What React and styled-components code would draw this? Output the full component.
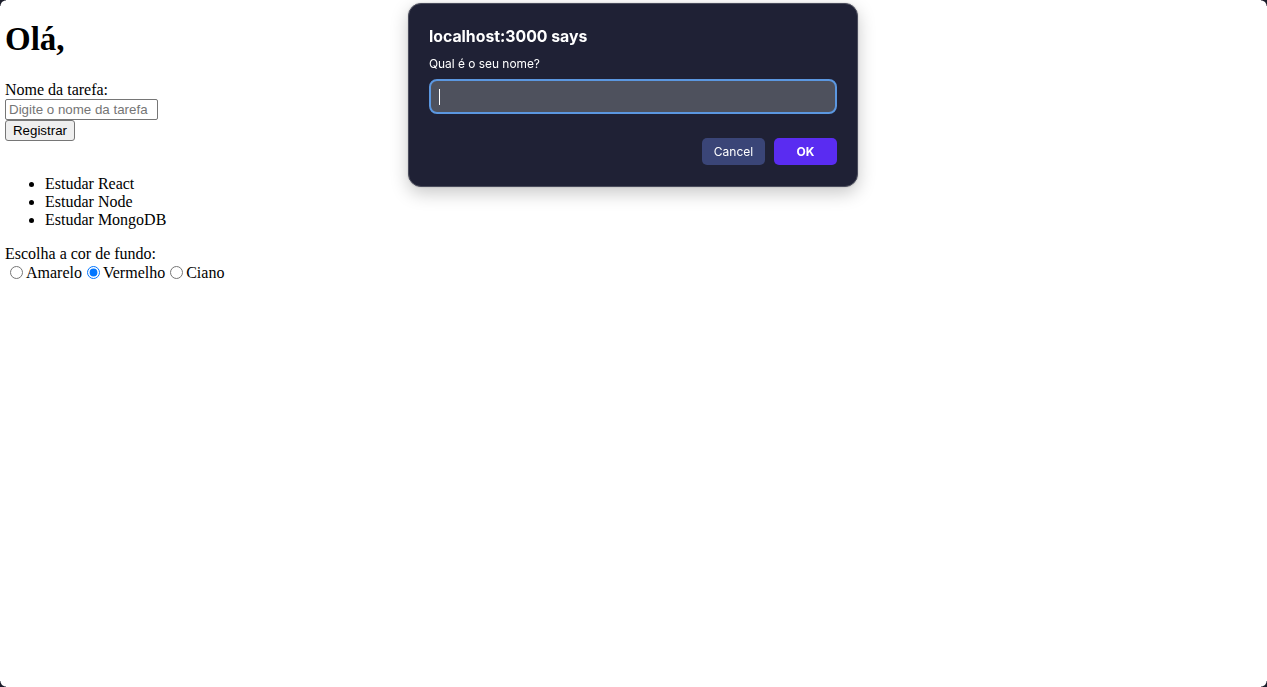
import styled, { createGlobalStyle } from 'styled-components';

const GlobalStyle = createGlobalStyle`
  html, body {
    margin: 0;
    background: #ffffff;
  }
  body {
    font-family: "Liberation Serif", "Times New Roman", serif;
    font-size: 16px;
    color: #000;
  }
`;

const tasks = ['Estudar React', 'Estudar Node', 'Estudar MongoDB'];
const colors = [
  { id: 'amarelo', label: 'Amarelo' },
  { id: 'vermelho', label: 'Vermelho' },
  { id: 'ciano', label: 'Ciano' },
];

export default function App() {
  return (
    <>
      <GlobalStyle />
      <Page>
        <Title>Olá,</Title>
        <form onSubmit={e => e.preventDefault()}>
          <label htmlFor="tarefa">Nome da tarefa:</label>
          <br />
          <TaskInput id="tarefa" placeholder="Digite o nome da tarefa" />
          <br />
          <NativeButton type="submit">Registrar</NativeButton>
        </form>
        <TaskList>
          {tasks.map(task => (
            <li key={task}>{task}</li>
          ))}
        </TaskList>
        <div>
          Escolha a cor de fundo:
          <br />
          {colors.map(color => (
            <RadioLabel key={color.id}>
              <Radio type="radio" name="cor" defaultChecked={color.id === 'vermelho'} />
              {color.label}
            </RadioLabel>
          ))}
        </div>
      </Page>

      <Dialog>
        <DialogTitle>localhost:3000 says</DialogTitle>
        <DialogMessage>Qual é o seu nome?</DialogMessage>
        <PromptField>
          <Caret />
        </PromptField>
        <DialogActions>
          <DialogButton>Cancel</DialogButton>
          <DialogButton $primary>OK</DialogButton>
        </DialogActions>
      </Dialog>

      <Corner $pos="tl" />
      <Corner $pos="tr" />
      <Corner $pos="bl" />
      <Corner $pos="br" />
    </>
  );
}

const Page = styled.div`
  padding: 0 5px;
  min-height: 687px;
  box-sizing: border-box;
  overflow: hidden;
`;

const Title = styled.h1`
  font-size: 33px;
  font-weight: 700;
  margin: 20px 0 23px;
  line-height: 38px;
`;

const TaskInput = styled.input`
  font-family: Arial, "Liberation Sans", sans-serif;
  font-size: 13.33px;
  width: 153px;
  height: 21px;
  box-sizing: border-box;
  padding: 1px 3px;
  margin: 0;
  border: 1px solid #767676;
  border-radius: 2px;
  color: #000;

  &::placeholder {
    color: #757575;
  }
`;

const NativeButton = styled.button`
  font-family: Arial, "Liberation Sans", sans-serif;
  font-size: 13.33px;
  height: 21px;
  width: 70px;
  margin: 0;
  padding: 1px 6px;
  border: 1px solid #767676;
  border-radius: 3px;
  background: #efefef;
  color: #000;
`;

const TaskList = styled.ul`
  margin: 34px 0 16px;
  padding-left: 40px;
  line-height: 18px;

  li {
    line-height: 18px;
  }
`;

const RadioLabel = styled.label`
  line-height: 18px;
`;

const Radio = styled.input`
  margin: 3px 3px 0 5px;
  width: 13px;
  height: 13px;
  vertical-align: -1px;
`;

const Dialog = styled.div`
  position: fixed;
  top: 3px;
  left: 408px;
  width: 450px;
  height: 184px;
  box-sizing: border-box;
  padding: 24px 20px 0 20px;
  background: #1f2135;
  border: 1px solid #4a4c5c;
  border-radius: 13px;
  box-shadow: 0 6px 18px rgba(0, 0, 0, 0.22), 0 0 2px rgba(0, 0, 0, 0.2);
  font-family: Inter, "Liberation Sans", sans-serif;
  color: #ffffff;
  display: flex;
  flex-direction: column;
`;

const DialogTitle = styled.div`
  font-size: 15.8px;
  font-weight: 700;
  line-height: 18px;
`;

const DialogMessage = styled.div`
  font-size: 11.9px;
  line-height: 14px;
  margin-top: 11px;
`;

const PromptField = styled.div`
  margin-top: 8px;
  height: 35px;
  box-sizing: border-box;
  border: 2px solid #5b97e0;
  border-radius: 8px;
  background: #4e515d;
  display: flex;
  align-items: center;
  padding-left: 8px;
`;

const Caret = styled.span`
  display: block;
  width: 1px;
  height: 16px;
  background: #ffffff;
`;

const DialogActions = styled.div`
  margin-top: 24px;
  display: flex;
  justify-content: flex-end;
  gap: 9px;
`;

const DialogButton = styled.button`
  width: 63px;
  height: 27px;
  border: none;
  border-radius: 5px;
  font-family: Inter, "Liberation Sans", sans-serif;
  font-size: 12px;
  font-weight: ${p => (p.$primary ? 700 : 400)};
  color: #ffffff;
  background: ${p => (p.$primary ? '#5a2cf1' : '#3a4577')};
  padding: 0;
`;

const Corner = styled.div`
  position: fixed;
  width: 6px;
  height: 6px;
  ${p => (p.$pos[0] === 't' ? 'top: 0;' : 'bottom: 0;')}
  ${p => (p.$pos[1] === 'l' ? 'left: 0;' : 'right: 0;')}
  background: radial-gradient(
    circle at ${p => (p.$pos[1] === 'l' ? '100%' : '0')} ${p => (p.$pos[0] === 't' ? '100%' : '0')},
    transparent 5px,
    #1b1d2b 6px
  );
`;
